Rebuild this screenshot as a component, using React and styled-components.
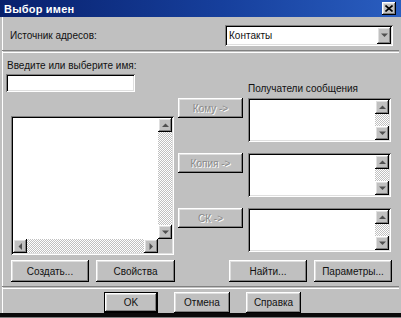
import React from 'react'
import styled, { createGlobalStyle, css } from 'styled-components'

const GlobalStyle = createGlobalStyle`
  html, body {
    margin: 0;
    padding: 0;
    background: #c0c0c0;
  }
  body {
    font-family: "Liberation Sans", Arial, sans-serif;
    font-size: 10px;
    color: #111;
  }
`

const raised = css`
  background: #c0c0c0;
  box-shadow: inset -1px -1px #000, inset 1px 1px #fff, inset -2px -2px #808080, inset 2px 2px #dfdfdf;
`

const sunken = css`
  background: #fff;
  box-shadow: inset 1px 1px #808080, inset -1px -1px #fff, inset 2px 2px #000, inset -2px -2px #dfdfdf;
`

const Window = styled.div`
  width: 401px;
  height: 318px;
  box-sizing: border-box;
  display: flex;
  flex-direction: column;
  background: #c0c0c0;
  overflow: hidden;
`

const TitleBar = styled.div`
  height: 17px;
  flex: none;
  display: flex;
  align-items: center;
  justify-content: space-between;
  padding: 0 5px 0 4px;
  background: linear-gradient(90deg, #08206c 0%, #163f9c 55%, #2a5ec0 100%);
  color: #fff;
  font-weight: bold;
  font-size: 11px;
  letter-spacing: 0.2px;
`

const CloseButton = styled.div`
  ${raised};
  width: 14px;
  height: 13px;
  display: grid;
  place-items: center;
`

const Body = styled.div`
  flex: 1;
  display: flex;
  flex-direction: column;
  padding-top: 8px;
  box-shadow: inset 2px 0 #c0c0c0, inset 3px 0 #fff;
  border-bottom: 1px solid #808080;
  box-sizing: border-box;
  &::after {
    content: "";
    display: block;
    height: 4px;
    background: #0a0a0a;
    margin-top: auto;
  }
`

const SourceRow = styled.div`
  display: flex;
  align-items: center;
  justify-content: space-between;
  height: 21px;
  padding: 0 8px 0 10px;
`

const Label = styled.div`
  line-height: 13px;
  height: 13px;
  white-space: nowrap;
  margin-left: ${({ indent }) => indent || 0}px;
`

const Combo = styled.div`
  ${sunken};
  width: 168px;
  height: 21px;
  box-sizing: border-box;
  padding: 2px 2px 2px 4px;
  display: flex;
  align-items: center;
  justify-content: space-between;
`

const ComboButton = styled.div`
  ${raised};
  width: 14px;
  height: 17px;
  display: grid;
  place-items: center;
`

const Separator = styled.div`
  height: 1px;
  border-top: 1px solid #808080;
  border-bottom: 1px solid #fff;
  margin: ${({ top }) => top}px 2px 0 2px;
`

const Main = styled.div`
  display: flex;
  height: 202px;
`

const LeftColumn = styled.div`
  width: 168px;
  margin-left: 6px;
  padding-top: 6px;
  display: flex;
  flex-direction: column;
`

const NameInput = styled.div`
  ${sunken};
  width: 129px;
  height: 18px;
  margin-top: 2px;
`

const ListBox = styled.div`
  ${sunken};
  box-sizing: border-box;
  padding: 2px;
  display: grid;
  grid-template-columns: 1fr 14px;
  grid-template-rows: ${({ hscroll }) => (hscroll ? '1fr 14px' : '1fr')};
  width: ${({ w }) => w}px;
  height: ${({ h }) => h}px;
  margin-top: ${({ top }) => top || 0}px;
  margin-left: ${({ left }) => left || 0}px;
`

const VScroll = styled.div`
  display: flex;
  flex-direction: column;
  justify-content: space-between;
  background: repeating-conic-gradient(#c0c0c0 0 25%, #fff 0 50%) 0 0 / 2px 2px;
`

const HScroll = styled.div`
  display: flex;
  justify-content: space-between;
  background: repeating-conic-gradient(#c0c0c0 0 25%, #fff 0 50%) 0 0 / 2px 2px;
`

const Corner = styled.div`
  background: #c0c0c0;
`

const ArrowButton = styled.div`
  ${raised};
  width: 14px;
  height: 14px;
  display: grid;
  place-items: center;
`

const RightPart = styled.div`
  display: flex;
  flex-direction: column;
  padding-top: 29px;
  margin-left: 4px;
`

const RecipientRows = styled.div`
  display: flex;
  flex-direction: column;
  gap: 11px;
  margin-top: 3px;
`

const RecipientRow = styled.div`
  display: flex;
  align-items: flex-start;
  gap: 5px;
`

const Button = styled.div`
  ${raised};
  box-sizing: border-box;
  width: ${({ w }) => w}px;
  height: ${({ h }) => h || 22}px;
  display: flex;
  align-items: center;
  justify-content: center;
  white-space: nowrap;
  color: ${({ disabled }) => (disabled ? '#8a8a8a' : '#111')};
  text-shadow: ${({ disabled }) => (disabled ? '1px 1px #fff' : 'none')};
  ${({ isDefault }) =>
    isDefault &&
    css`
      box-shadow: inset 0 0 0 1px #000, inset -2px -2px #000, inset 2px 2px #fff, inset -3px -3px #808080, inset 3px 3px #dfdfdf;
    `}
`

const ActionRow = styled.div`
  display: flex;
  justify-content: space-between;
  margin-top: 5px;
  padding: 0 9px 0 11px;
`

const ButtonGroup = styled.div`
  display: flex;
  gap: 7px;
`

const DialogButtons = styled.div`
  display: flex;
  gap: 16px;
  margin-top: 3px;
  padding-left: 104px;
`

const Arrow = ({ dir }) => {
  const points = {
    up: '0,4 3.5,0.5 7,4',
    down: '0,0.5 3.5,4 7,0.5',
    left: '4,0 0.5,3.5 4,7',
    right: '0.5,0 4,3.5 0.5,7',
  }[dir]
  const vertical = dir === 'up' || dir === 'down'
  return (
    <svg width={vertical ? 7 : 5} height={vertical ? 5 : 7} viewBox={vertical ? '0 0 7 5' : '0 0 5 7'}>
      <polygon points={points} fill="#505050" />
    </svg>
  )
}

const RecipientList = () => (
  <ListBox w={143} h={44}>
    <div />
    <VScroll>
      <ArrowButton><Arrow dir="up" /></ArrowButton>
      <ArrowButton><Arrow dir="down" /></ArrowButton>
    </VScroll>
  </ListBox>
)

export default function App() {
  return (
    <>
      <GlobalStyle />
      <Window>
        <TitleBar>
          <span>Выбор имен</span>
          <CloseButton>
            <svg width="8" height="7" viewBox="0 0 8 7">
              <path d="M0.5 0.5 L7.5 6.5 M7.5 0.5 L0.5 6.5" stroke="#000" strokeWidth="1.6" />
            </svg>
          </CloseButton>
        </TitleBar>
        <Body>
          <SourceRow>
            <Label>Источник адресов:</Label>
            <Combo>
              <span>Контакты</span>
              <ComboButton><Arrow dir="down" /></ComboButton>
            </Combo>
          </SourceRow>
          <Separator top={4} />
          <Main>
            <LeftColumn>
              <Label indent={1}>Введите или выберите имя:</Label>
              <NameInput />
              <ListBox w={163} h={139} top={24} left={5} hscroll>
                <div />
                <VScroll>
                  <ArrowButton><Arrow dir="up" /></ArrowButton>
                  <ArrowButton><Arrow dir="down" /></ArrowButton>
                </VScroll>
                <HScroll>
                  <ArrowButton><Arrow dir="left" /></ArrowButton>
                  <ArrowButton><Arrow dir="right" /></ArrowButton>
                </HScroll>
                <Corner />
              </ListBox>
            </LeftColumn>
            <RightPart>
              <Label indent={70}>Получатели сообщения</Label>
              <RecipientRows>
                <RecipientRow>
                  <Button w={65} h={20} disabled>Кому -&gt;</Button>
                  <RecipientList />
                </RecipientRow>
                <RecipientRow>
                  <Button w={65} h={20} disabled>Копия -&gt;</Button>
                  <RecipientList />
                </RecipientRow>
                <RecipientRow>
                  <Button w={65} h={20} disabled>СК -&gt;</Button>
                  <RecipientList />
                </RecipientRow>
              </RecipientRows>
            </RightPart>
          </Main>
          <ActionRow>
            <ButtonGroup>
              <Button w={78}>Создать...</Button>
              <Button w={79}>Свойства</Button>
            </ButtonGroup>
            <ButtonGroup>
              <Button w={78}>Найти...</Button>
              <Button w={78}>Параметры...</Button>
            </ButtonGroup>
          </ActionRow>
          <Separator top={4} />
          <DialogButtons>
            <Button w={54} h={21} isDefault>OK</Button>
            <Button w={56} h={21}>Отмена</Button>
            <Button w={55} h={21}>Справка</Button>
          </DialogButtons>
        </Body>
      </Window>
    </>
  )
}
